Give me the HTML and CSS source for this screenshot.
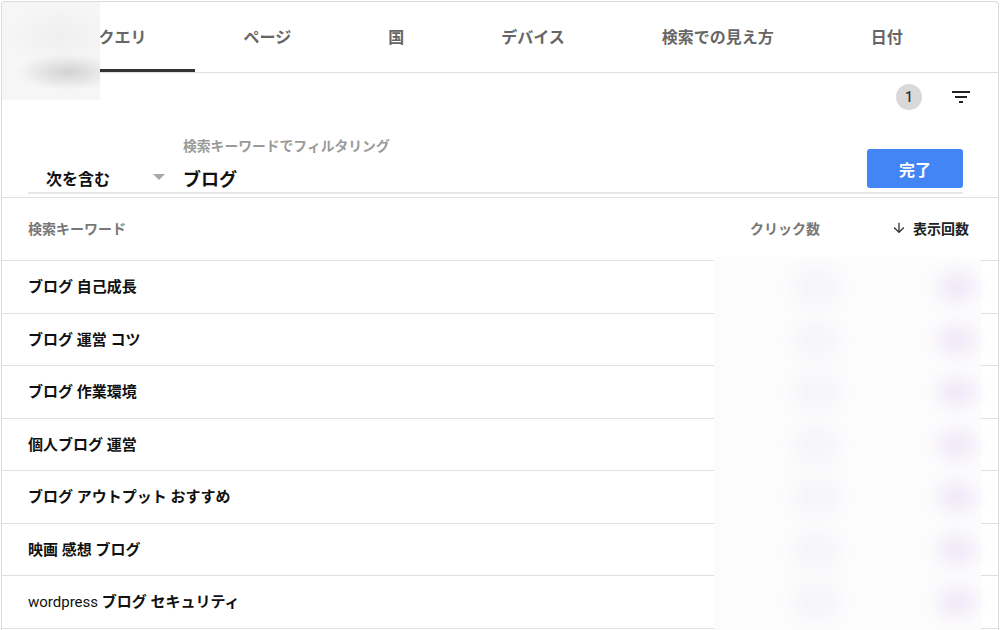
FILE: index.html
```html
<!DOCTYPE html>
<html>
  <head>
    <title>検索パフォーマンス</title>
    <link rel="stylesheet" href="styles.css">
  </head>
  <body>
    <div class="card">
      <div class="tabs">
        <div class="tab active">検索クエリ</div>
        <div class="tab">ページ</div>
        <div class="tab">国</div>
        <div class="tab">デバイス</div>
        <div class="tab">検索での見え方</div>
        <div class="tab">日付</div>
      </div>

      <div class="toolbar">
        <span class="badge">1</span>
        <svg class="filter-icon" width="24" height="24" viewBox="0 0 24 24">
          <path d="M10 18h4v-2h-4v2zM3 6v2h18V6H3zm3 7h12v-2H6v2z" fill="#222"/>
        </svg>
      </div>

      <div class="filter-wrap">
        <div class="filter">
          <div class="select">
            <span>次を含む</span>
            <span class="caret"></span>
          </div>
          <div class="field">
            <label>検索キーワードでフィルタリング</label>
            <div class="value">ブログ</div>
          </div>
          <button class="done">完了</button>
        </div>
      </div>

      <div class="table">
        <div class="row head">
          <div class="col-key">検索キーワード</div>
          <div class="col-num">クリック数</div>
          <div class="col-num sorted">
            <svg width="16" height="16" viewBox="0 0 24 24">
              <path d="M20 12l-1.41-1.41L13 16.17V4h-2v12.17l-5.58-5.59L4 12l8 8 8-8z" fill="#333"/>
            </svg>
            表示回数
          </div>
        </div>
        <div class="row"><div class="col-key">ブログ 自己成長</div><div class="col-num"></div><div class="col-num"></div></div>
        <div class="row"><div class="col-key">ブログ 運営 コツ</div><div class="col-num"></div><div class="col-num"></div></div>
        <div class="row"><div class="col-key">ブログ 作業環境</div><div class="col-num"></div><div class="col-num"></div></div>
        <div class="row"><div class="col-key">個人ブログ 運営</div><div class="col-num"></div><div class="col-num"></div></div>
        <div class="row"><div class="col-key">ブログ アウトプット おすすめ</div><div class="col-num"></div><div class="col-num"></div></div>
        <div class="row"><div class="col-key">映画 感想 ブログ</div><div class="col-num"></div><div class="col-num"></div></div>
        <div class="row"><div class="col-key"><span class="latin">wordpress</span> ブログ セキュリティ</div><div class="col-num"></div><div class="col-num"></div></div>
      </div>

      <!-- blurred parts of the screenshot -->
      <div class="blur-corner"></div>
      <div class="blur-numbers">
        <div class="blur-row"><span class="blob-a"></span><span class="blob-b"></span></div>
        <div class="blur-row"><span class="blob-a"></span><span class="blob-b"></span></div>
        <div class="blur-row"><span class="blob-a"></span><span class="blob-b"></span></div>
        <div class="blur-row"><span class="blob-a"></span><span class="blob-b"></span></div>
        <div class="blur-row"><span class="blob-a"></span><span class="blob-b"></span></div>
        <div class="blur-row"><span class="blob-a"></span><span class="blob-b"></span></div>
        <div class="blur-row"><span class="blob-a"></span><span class="blob-b"></span></div>
      </div>
    </div>
  </body>
</html>
```

FILE: styles.css
```css
body {
  margin: 0;
  background-color: #fff;
  font-family: Roboto, "Noto Sans CJK JP", sans-serif;
  color: #202124;
}

.card {
  position: relative;
  margin: 1px 1px 0 1px;
  height: 629px;
  border: 1px solid #dcdcdc;
  border-bottom: none;
  border-radius: 4px 4px 0 0;
  box-sizing: border-box;
  overflow: hidden;
}

.tabs {
  display: flex;
  height: 70px;
  padding-left: 16px;
  border-bottom: 1px solid #e0e0e0;
}

.tab {
  display: flex;
  align-items: center;
  padding: 0 48.5px;
  font-size: 16px;
  font-weight: bold;
  color: #666;
  box-sizing: border-box;
  border-bottom: 3px solid transparent;
  padding-top: 1px;
}

.tab.active {
  border-bottom-color: #333;
}

.toolbar {
  display: flex;
  justify-content: flex-end;
  align-items: center;
  height: 48px;
  padding-right: 25px;
}

.badge {
  width: 26px;
  height: 26px;
  border-radius: 50%;
  background-color: #d9d9d9;
  color: #333;
  font-size: 14px;
  font-weight: 500;
  display: flex;
  align-items: center;
  justify-content: center;
  margin-right: 27px;
}

.filter-wrap {
  border-bottom: 1px solid #e0e0e0;
  padding-bottom: 3px;
}

.filter {
  display: flex;
  align-items: flex-end;
  margin: 0 35px 0 26px;
  padding-top: 14px;
  padding-bottom: 0;
  border-bottom: 2px solid #e8e8e8;
}

.select {
  display: flex;
  align-items: center;
  justify-content: space-between;
  width: 121px;
  padding-left: 18px;
  margin-right: 16px;
  margin-bottom: 2px;
  font-size: 16px;
  font-weight: bold;
  color: #111;
  height: 24px;
}

.caret {
  width: 0;
  height: 0;
  border-left: 6px solid transparent;
  border-right: 6px solid transparent;
  border-top: 6px solid #a8a8a8;
  margin-bottom: 3px;
  margin-right: 2px;
}

.field {
  flex: 1;
  display: flex;
  flex-direction: column;
}

.field label {
  font-size: 13.8px;
  font-weight: bold;
  color: #9a9a9a;
  margin-bottom: 13px;
}

.value {
  font-size: 18px;
  font-weight: bold;
  color: #111;
  line-height: 24px;
}

.done {
  width: 96px;
  height: 39px;
  margin-bottom: 4px;
  border: none;
  border-radius: 3px;
  background-color: #4285f4;
  color: #fff;
  font-family: Roboto, "Noto Sans CJK JP", sans-serif;
  font-size: 16px;
  font-weight: bold;
}

.row {
  display: flex;
  align-items: center;
  height: 52.5px;
  padding: 0 29px 0 26px;
  border-bottom: 1px solid #e0e0e0;
  box-sizing: border-box;
  font-size: 15px;
  font-weight: bold;
  color: #111;
  padding-bottom: 2px;
}

.row.head {
  height: 63px;
  font-size: 14px;
  color: #777;
}

.col-key {
  flex: 1;
}

.col-num {
  width: 149px;
  text-align: right;
}

.sorted {
  color: #222;
  display: flex;
  align-items: center;
  justify-content: flex-end;
  gap: 6px;
}

.latin {
  font-weight: normal;
}

.blur-corner {
  position: absolute;
  left: -2px;
  top: -2px;
  width: 100px;
  height: 100px;
  background:
    radial-gradient(ellipse 50px 18px at 68px 72px, #d2d2d2, rgba(240,240,240,0)),
    radial-gradient(ellipse 55px 30px at 60px 35px, #efefef, rgba(247,247,247,0)),
    #f6f6f6;
}

.blur-numbers {
  position: absolute;
  left: 712px;
  top: 255px;
  width: 267px;
  height: 380px;
  padding-top: 4px;
  box-sizing: border-box;
  background-color: #fcfcfd;
}

.blur-row {
  display: flex;
  align-items: center;
  height: 52.5px;
}

.blob-a {
  width: 44px;
  height: 36px;
  margin-left: 80px;
  border-radius: 50%;
  background-color: #f5f5fa;
  filter: blur(8px);
}

.blob-b {
  width: 38px;
  height: 30px;
  margin-left: 100px;
  border-radius: 50%;
  background-color: #f1e8f8;
  filter: blur(8px);
}
```
